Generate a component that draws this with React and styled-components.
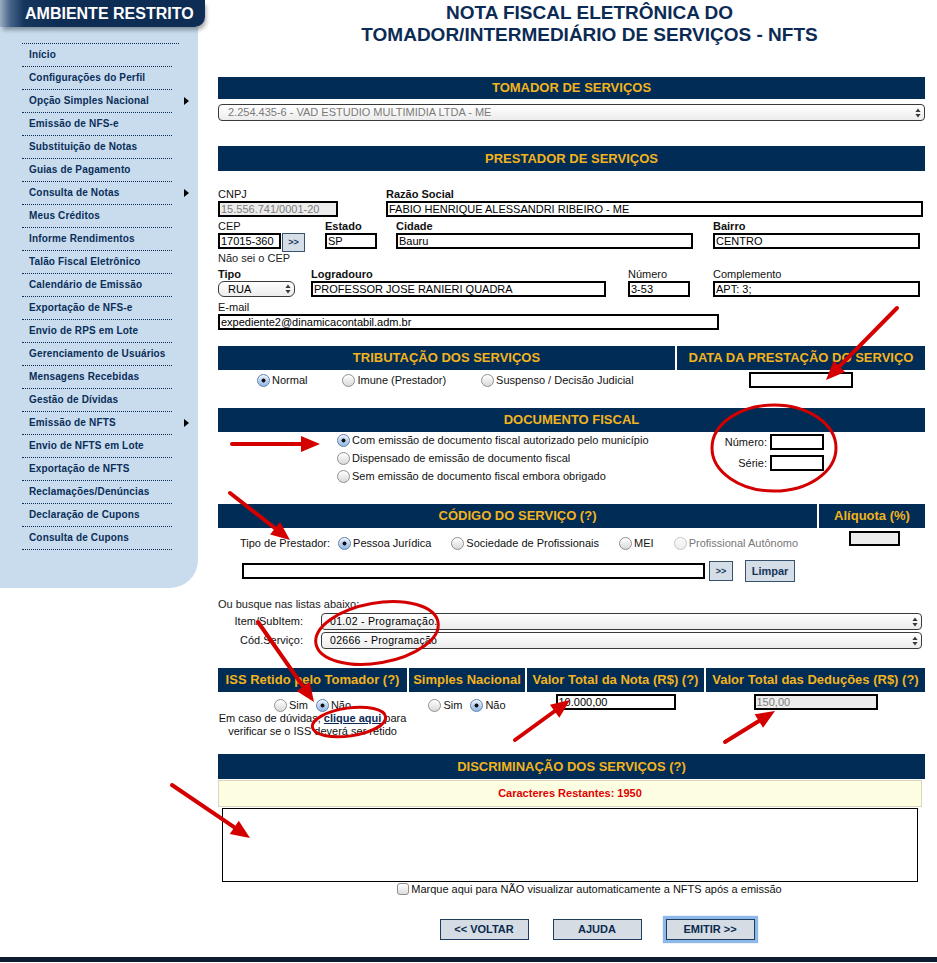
import React from 'react';
import styled, { createGlobalStyle } from 'styled-components';

const GlobalStyle = createGlobalStyle`
  html, body { margin: 0; padding: 0; background: #fff; overflow: hidden; }
  body { font-family: "Liberation Sans", Arial, sans-serif; font-size: 11px; color: #111; }
  * { box-sizing: border-box; }
`;

const NAVY = '#012c55';
const GOLD = '#f2b31e';
const FONT = '"Liberation Sans", Arial, sans-serif';

const Page = styled.div`
  position: relative;
  width: 937px;
  height: 963px;
  overflow: hidden;
`;

const Layout = styled.div`
  display: flex;
  align-items: flex-start;
`;

/* ---------- Sidebar ---------- */
const Sidebar = styled.aside`
  width: 205px;
  flex: none;
  display: flex;
  flex-direction: column;
`;

const SideHeader = styled.div`
  position: relative;
  z-index: 1;
  height: 27px;
  width: 205px;
  padding-left: 25px;
  background: linear-gradient(90deg, #9aaec2 0px, #46648a 10px, #16365e 24px, #0d2d55 60px, #0d2d55 100%);
  border-bottom-right-radius: 10px;
  box-shadow: 2px 4px 4px -1px rgba(0, 0, 0, 0.35);
  color: #fff;
  font: bold 16px/27px ${FONT};
  white-space: nowrap;
`;

const SidePanel = styled.div`
  width: 198px;
  height: 561px;
  padding-top: 16px;
  background: #c8dcee;
  border-bottom-right-radius: 28px;
`;

const Menu = styled.ul`
  list-style: none;
  margin: 0 0 0 22px;
  padding: 0;
  width: 157px;
  border-top: 1px dotted #0b2e59;
`;

const MenuRow = styled.li`
  display: flex;
  align-items: center;
  overflow: visible;
`;

const MenuLink = styled.span`
  flex: none;
  width: 150px;
  height: 23px;
  padding-left: 7px;
  border-bottom: 1px dotted #0b2e59;
  color: #0b2e59;
  font: bold 10px/22px ${FONT};
  letter-spacing: 0.15px;
  white-space: nowrap;
`;

const SubArrow = styled.span`
  flex: none;
  margin-left: 12px;
  margin-top: -1px;
  width: 0;
  height: 0;
  border-left: 5px solid #000;
  border-top: 4px solid transparent;
  border-bottom: 4px solid transparent;
`;

/* ---------- Main ---------- */
const Main = styled.main`
  margin-left: 13px;
  width: 707px;
  flex: none;
  display: flex;
  flex-direction: column;
`;

const Title = styled.h1`
  margin: 2px 0 0;
  padding-left: 36px;
  text-align: center;
  color: #0b2b55;
  font: bold 19px/22px ${FONT};
`;

const SectionBar = styled.div`
  height: ${(p) => p.$h || 24}px;
  margin-top: ${(p) => p.$mt || 0}px;
  background: ${NAVY};
  color: ${GOLD};
  text-align: center;
  font: bold 13px/${(p) => p.$h || 24}px ${FONT};
  white-space: nowrap;
  overflow: hidden;
`;

const SelectBox = styled.div`
  display: flex;
  align-items: center;
  justify-content: space-between;
  height: ${(p) => p.$h || 17}px;
  width: ${(p) => (p.$w ? `${p.$w}px` : '100%')};
  margin-top: ${(p) => p.$mt || 0}px;
  padding: 0 3px 0 ${(p) => p.$pl ?? 9}px;
  border: 1px solid #3a3a3a;
  border-radius: ${(p) => p.$r || 4}px;
  background: linear-gradient(#ffffff, #ececec);
  color: ${(p) => p.$color || '#000'};
  font: ${(p) => p.$fs || 11}px/1 ${FONT};
  letter-spacing: ${(p) => p.$ls || 0}px;
  white-space: nowrap;
`;

const UpDown = () => (
  <svg width="6" height="10" viewBox="0 0 6 10">
    <path d="M3 0.5 L5.6 4 L0.4 4 Z M3 9.5 L5.6 6 L0.4 6 Z" fill="#3a3a3a" />
  </svg>
);

const FieldRow = styled.div`
  display: flex;
  align-items: flex-start;
  margin-top: ${(p) => p.$mt || 0}px;
`;

const Field = styled.div`
  display: flex;
  flex-direction: column;
  width: ${(p) => p.$w}px;
  margin-left: ${(p) => p.$ml || 0}px;
  flex: none;
`;

const Label = styled.span`
  font: ${(p) => (p.$bold ? 'bold' : 'normal')} 11px/13px ${FONT};
  color: #111;
  white-space: nowrap;
`;

const TextInput = styled.input`
  display: block;
  width: ${(p) => (p.$w ? `${p.$w}px` : '100%')};
  height: ${(p) => p.$h || 16}px;
  margin: ${(p) => p.$m || 0};
  padding: 0 1px;
  border: 2px solid #000;
  border-radius: 0;
  background: ${(p) => (p.$gray ? '#ececec' : '#fff')};
  color: ${(p) => (p.$gray ? '#7d7d7d' : '#000')};
  font: 11px/12px ${FONT};
  outline: none;
`;

const SmallBtn = styled.button`
  width: ${(p) => p.$w}px;
  height: ${(p) => p.$h}px;
  margin-left: ${(p) => p.$ml || 0}px;
  padding: 0;
  border: 1px solid #37526f;
  background: #d5dde6;
  color: #17365d;
  font: bold ${(p) => p.$fs || 9}px/1 ${FONT};
  flex: none;
`;

const InlineWrap = styled.div`
  display: flex;
  align-items: flex-start;
`;

const Note = styled.div`
  color: #222;
  font: 11px/13px ${FONT};
  margin-top: ${(p) => p.$mt || 0}px;
`;

const Grid = styled.div`
  display: grid;
  grid-template-columns: ${(p) => p.$cols};
  column-gap: 2px;
  margin-top: ${(p) => p.$mt || 0}px;
`;

const Cell = styled.div`
  display: flex;
  flex-direction: column;
  align-items: ${(p) => p.$align || 'stretch'};
  padding-top: ${(p) => p.$pt || 0}px;
`;

const RadioGroup = styled.div`
  display: flex;
  align-items: center;
  height: ${(p) => p.$h || 15}px;
  gap: ${(p) => p.$gap}px;
  padding-left: ${(p) => p.$pl || 0}px;
  justify-content: ${(p) => p.$justify || 'flex-start'};
  margin-top: ${(p) => p.$mt || 0}px;
`;

const RadioOpt = styled.label`
  display: flex;
  align-items: center;
  gap: 2px;
  color: ${(p) => (p.$disabled ? '#777' : '#111')};
  font: 11px/13px ${FONT};
  white-space: nowrap;
`;

const RadioDot = styled.span`
  flex: none;
  width: 13px;
  height: 13px;
  border-radius: 50%;
  border: 1px solid ${(p) => (p.$checked ? '#5d80ae' : p.$disabled ? '#c4c4c4' : '#8f8f8f')};
  background: ${(p) =>
    p.$checked
      ? 'radial-gradient(circle at 50% 50%, #111 0 1.7px, transparent 2.3px), linear-gradient(#e4eefb, #93b7e4)'
      : p.$disabled
      ? 'linear-gradient(#fafafa, #eeeeee)'
      : 'linear-gradient(#ffffff, #d9d9d9)'};
  box-shadow: inset 0 1px 1px rgba(255, 255, 255, 0.8);
`;

const Radio = ({ label, checked, disabled }) => (
  <RadioOpt $disabled={disabled}>
    <RadioDot $checked={checked} $disabled={disabled} />
    {label}
  </RadioOpt>
);

const DocBody = styled.div`
  display: flex;
  align-items: flex-start;
  padding-left: 119px;
`;

const DocOptions = styled.div`
  display: flex;
  flex-direction: column;
  margin-top: -1px;
`;

const DocOptRow = styled.div`
  display: flex;
  align-items: center;
  height: 18px;
`;

const NumGrid = styled.div`
  display: grid;
  grid-template-columns: auto 54px;
  column-gap: 3px;
  row-gap: 5px;
  align-items: center;
  justify-items: end;
  margin: 2px 101px 0 auto;
`;

const PlainText = styled.span`
  font: ${(p) => (p.$bold ? 'bold' : 'normal')} 11px/13px ${FONT};
  color: ${(p) => p.$color || '#111'};
  white-space: nowrap;
`;

const TipoRow = styled.div`
  display: flex;
  align-items: center;
  height: 14px;
  margin-top: 8px;
  padding-left: 22px;
  gap: 8px;
`;

const TipoRadios = styled.div`
  display: flex;
  align-items: center;
  gap: 20px;
`;

const SearchRow = styled.div`
  display: flex;
  align-items: center;
  height: 22px;
  margin-top: 10px;
  padding-left: 24px;
`;

const ListGrid = styled.div`
  display: grid;
  grid-template-columns: 85px 601px;
  column-gap: 18px;
  row-gap: 2px;
  align-items: center;
  margin-top: 2px;
`;

const ListLabel = styled.span`
  justify-self: end;
  font: 11px/13px ${FONT};
  color: #111;
  white-space: nowrap;
`;

const HelpText = styled.div`
  text-align: center;
  font: 11px/13px ${FONT};
  color: #111;
  white-space: nowrap;
`;

const HelpLink = styled.a`
  color: #0b2b55;
  font-weight: bold;
  text-decoration: underline;
`;

const CounterBox = styled.div`
  width: 704px;
  height: 27px;
  margin-top: 1px;
  border: 1px solid #d9d7bd;
  background: #fdfde2;
  color: #e00000;
  text-align: center;
  font: bold 11px/25px ${FONT};
`;

const TextArea = styled.textarea`
  display: block;
  width: 696px;
  height: 74px;
  margin: 1px 0 0 4px;
  border: 1px solid #000;
  resize: none;
  outline: none;
  font: 11px ${FONT};
`;

const CheckLine = styled.div`
  display: flex;
  align-items: center;
  justify-content: center;
  gap: 2px;
  height: 14px;
  padding-left: 36px;
  font: 11px/13px ${FONT};
  color: #111;
`;

const CheckBox = styled.span`
  width: 12px;
  height: 12px;
  border: 1px solid #8d8d8d;
  border-radius: 3px;
  background: linear-gradient(#ffffff, #dcdcdc);
`;

const ButtonRow = styled.div`
  display: flex;
  justify-content: center;
  gap: 24px;
  margin-top: 23px;
  padding-left: 51px;
`;

const ActionBtn = styled.button`
  width: 89px;
  height: 21px;
  padding: 0;
  border: 1px solid #1f3b5d;
  background: #d5dce4;
  color: #0b2a4d;
  font: bold 11px/1 ${FONT};
  box-shadow: ${(p) => (p.$focus ? '0 0 1px 3px #8fb8ea' : 'none')};
`;

const Footer = styled.footer`
  height: 5px;
  margin-top: 17px;
  background: #0c1b30;
`;

const Overlay = styled.svg`
  position: absolute;
  left: 0;
  top: 0;
  pointer-events: none;
`;

const menu = [
  ['Início'],
  ['Configurações do Perfil'],
  ['Opção Simples Nacional', true],
  ['Emissão de NFS-e'],
  ['Substituição de Notas'],
  ['Guias de Pagamento'],
  ['Consulta de Notas', true],
  ['Meus Créditos'],
  ['Informe Rendimentos'],
  ['Talão Fiscal Eletrônico'],
  ['Calendário de Emissão'],
  ['Exportação de NFS-e'],
  ['Envio de RPS em Lote'],
  ['Gerenciamento de Usuários'],
  ['Mensagens Recebidas'],
  ['Gestão de Dívidas'],
  ['Emissão de NFTS', true],
  ['Envio de NFTS em Lote'],
  ['Exportação de NFTS'],
  ['Reclamações/Denúncias'],
  ['Declaração de Cupons'],
  ['Consulta de Cupons'],
];

const arrows = [
  [[897, 308], [826, 380]],
  [[232, 444], [320, 444]],
  [[230, 493], [290, 540]],
  [[258, 622], [314, 702]],
  [[515, 740], [570, 700]],
  [[725, 742], [775, 711]],
  [[172, 785], [250, 838]],
];

const Arrow = ({ from, to }) => {
  const [x1, y1] = from;
  const [x2, y2] = to;
  const dx = x2 - x1;
  const dy = y2 - y1;
  const len = Math.hypot(dx, dy);
  const ux = dx / len;
  const uy = dy / len;
  const L = 19;
  const W = 8;
  const bx = x2 - ux * L;
  const by = y2 - uy * L;
  const p1 = `${bx - uy * W},${by + ux * W}`;
  const p2 = `${bx + uy * W},${by - ux * W}`;
  return (
    <g>
      <line x1={x1} y1={y1} x2={bx + ux * 2} y2={by + uy * 2} stroke="#d40000" strokeWidth="4" strokeLinecap="round" />
      <polygon points={`${x2},${y2} ${p1} ${p2}`} fill="#d40000" />
    </g>
  );
};

export default function App() {
  return (
    <Page>
      <GlobalStyle />
      <Layout>
        <Sidebar>
          <SideHeader>AMBIENTE RESTRITO</SideHeader>
          <SidePanel>
            <Menu>
              {menu.map(([label, sub]) => (
                <MenuRow key={label}>
                  <MenuLink>{label}</MenuLink>
                  {sub && <SubArrow />}
                </MenuRow>
              ))}
            </Menu>
          </SidePanel>
        </Sidebar>

        <Main>
          <Title>
            NOTA FISCAL ELETRÔNICA DO
            <br />
            TOMADOR/INTERMEDIÁRIO DE SERVIÇOS - NFTS
          </Title>

          <SectionBar $h={22} $mt={31}>TOMADOR DE SERVIÇOS</SectionBar>
          <SelectBox $mt={5} $color="#7a7a7a">
            <span>2.254.435-6 - VAD ESTUDIO MULTIMIDIA LTDA - ME</span>
            <UpDown />
          </SelectBox>

          <SectionBar $h={25} $mt={25}>PRESTADOR DE SERVIÇOS</SectionBar>

          <FieldRow $mt={17}>
            <Field $w={120}>
              <Label>CNPJ</Label>
              <TextInput $gray readOnly defaultValue="15.556.741/0001-20" />
            </Field>
            <Field $w={537} $ml={48}>
              <Label $bold>Razão Social</Label>
              <TextInput readOnly defaultValue="FABIO HENRIQUE ALESSANDRI RIBEIRO - ME" />
            </Field>
          </FieldRow>

          <FieldRow $mt={3}>
            <Field $w={87}>
              <Label>CEP</Label>
              <InlineWrap>
                <TextInput $w={63} readOnly defaultValue="17015-360" />
                <SmallBtn $w={23} $h={19} $ml={1}>&gt;&gt;</SmallBtn>
              </InlineWrap>
            </Field>
            <Field $w={52} $ml={20}>
              <Label $bold>Estado</Label>
              <TextInput readOnly defaultValue="SP" />
            </Field>
            <Field $w={297} $ml={19}>
              <Label $bold>Cidade</Label>
              <TextInput readOnly defaultValue="Bauru" />
            </Field>
            <Field $w={207} $ml={20}>
              <Label $bold>Bairro</Label>
              <TextInput readOnly defaultValue="CENTRO" />
            </Field>
          </FieldRow>
          <Note>Não sei o CEP</Note>

          <FieldRow $mt={3}>
            <Field $w={77}>
              <Label $bold>Tipo</Label>
              <SelectBox $h={16} $r={6} $pl={9}>
                <span>RUA</span>
                <UpDown />
              </SelectBox>
            </Field>
            <Field $w={295} $ml={16}>
              <Label $bold>Logradouro</Label>
              <TextInput readOnly defaultValue="PROFESSOR JOSE RANIERI QUADRA" />
            </Field>
            <Field $w={62} $ml={22}>
              <Label>Número</Label>
              <TextInput readOnly defaultValue="3-53" />
            </Field>
            <Field $w={207} $ml={23}>
              <Label>Complemento</Label>
              <TextInput readOnly defaultValue="APT: 3;" />
            </Field>
          </FieldRow>

          <FieldRow $mt={4}>
            <Field $w={501}>
              <Label>E-mail</Label>
              <TextInput readOnly defaultValue="expediente2@dinamicacontabil.adm.br" />
            </Field>
          </FieldRow>

          <Grid $cols="457px 248px" $mt={16}>
            <SectionBar>TRIBUTAÇÃO DOS SERVIÇOS</SectionBar>
            <SectionBar>DATA DA PRESTAÇÃO DO SERVIÇO</SectionBar>
            <Cell $pt={2}>
              <RadioGroup $gap={35} $pl={39} $h={16}>
                <Radio label="Normal" checked />
                <Radio label="Imune (Prestador)" />
                <Radio label="Suspenso / Decisão Judicial" />
              </RadioGroup>
            </Cell>
            <Cell $pt={2} $align="center">
              <TextInput $w={104} readOnly defaultValue="" />
            </Cell>
          </Grid>

          <SectionBar $mt={20}>DOCUMENTO FISCAL</SectionBar>
          <DocBody>
            <DocOptions>
              <DocOptRow><Radio label="Com emissão de documento fiscal autorizado pelo município" checked /></DocOptRow>
              <DocOptRow><Radio label="Dispensado de emissão de documento fiscal" /></DocOptRow>
              <DocOptRow><Radio label="Sem emissão de documento fiscal embora obrigado" /></DocOptRow>
            </DocOptions>
            <NumGrid>
              <PlainText>Número:</PlainText>
              <TextInput readOnly defaultValue="" />
              <PlainText>Série:</PlainText>
              <TextInput readOnly defaultValue="" />
            </NumGrid>
          </DocBody>

          <Grid $cols="599px 106px" $mt={19}>
            <SectionBar>CÓDIGO DO SERVIÇO (?)</SectionBar>
            <SectionBar>Alíquota (%)</SectionBar>
            <Cell>
              <TipoRow>
                <PlainText>Tipo de Prestador:</PlainText>
                <TipoRadios>
                  <Radio label="Pessoa Jurídica" checked />
                  <Radio label="Sociedade de Profissionais" />
                  <Radio label="MEI" />
                  <Radio label="Profissional Autônomo" disabled />
                </TipoRadios>
              </TipoRow>
            </Cell>
            <Cell $align="center">
              <TextInput $w={51} $h={15} $m="3px 0 0 4px" $gray readOnly defaultValue="" />
            </Cell>
          </Grid>

          <SearchRow>
            <TextInput $w={463} readOnly defaultValue="" />
            <SmallBtn $w={24} $h={20} $ml={4}>&gt;&gt;</SmallBtn>
            <SmallBtn $w={50} $h={22} $ml={12} $fs={11}>Limpar</SmallBtn>
          </SearchRow>

          <Note $mt={16}>Ou busque nas listas abaixo:</Note>
          <ListGrid>
            <ListLabel>Item/SubItem:</ListLabel>
            <SelectBox $pl={8} $fs={10.5} $ls={0.3}>
              <span>01.02 - Programação.</span>
              <UpDown />
            </SelectBox>
            <ListLabel>Cód.Serviço:</ListLabel>
            <SelectBox $pl={8} $fs={10.5} $ls={0.3}>
              <span>02666 - Programação</span>
              <UpDown />
            </SelectBox>
          </ListGrid>

          <Grid $cols="189px 116px 177px 219px" $mt={19}>
            <SectionBar>ISS Retido pelo Tomador (?)</SectionBar>
            <SectionBar>Simples Nacional</SectionBar>
            <SectionBar>Valor Total da Nota (R$) (?)</SectionBar>
            <SectionBar>Valor Total das Deduções (R$) (?)</SectionBar>
            <Cell>
              <RadioGroup $gap={8} $justify="center" $h={13} $mt={7}>
                <Radio label="Sim" />
                <Radio label="Não" checked />
              </RadioGroup>
              <HelpText>
                Em caso de dúvidas, <HelpLink>clique aqui</HelpLink> para
                <br />
                verificar se o ISS deverá ser retido
              </HelpText>
            </Cell>
            <Cell>
              <RadioGroup $gap={8} $justify="center" $h={13} $mt={7}>
                <Radio label="Sim" />
                <Radio label="Não" checked />
              </RadioGroup>
            </Cell>
            <Cell $align="center" $pt={2}>
              <TextInput $w={120} readOnly defaultValue="10.000,00" />
            </Cell>
            <Cell $align="center" $pt={2}>
              <TextInput $w={124} $gray readOnly defaultValue="150,00" />
            </Cell>
          </Grid>

          <SectionBar $h={25} $mt={16}>DISCRIMINAÇÃO DOS SERVIÇOS (?)</SectionBar>
          <CounterBox>Caracteres Restantes: 1950</CounterBox>
          <TextArea readOnly defaultValue="" />
          <CheckLine>
            <CheckBox />
            Marque aqui para NÃO visualizar automaticamente a NFTS após a emissão
          </CheckLine>

          <ButtonRow>
            <ActionBtn>&lt;&lt; VOLTAR</ActionBtn>
            <ActionBtn>AJUDA</ActionBtn>
            <ActionBtn $focus>EMITIR &gt;&gt;</ActionBtn>
          </ButtonRow>
        </Main>
      </Layout>
      <Footer />

      <Overlay width="937" height="963" viewBox="0 0 937 963">
        <ellipse cx="774" cy="448" rx="62" ry="43" fill="none" stroke="#d40000" strokeWidth="3" />
        <ellipse cx="377" cy="633" rx="62" ry="30" fill="none" stroke="#d40000" strokeWidth="3" transform="rotate(-10 377 633)" />
        <ellipse cx="349" cy="722" rx="37" ry="14" fill="none" stroke="#d40000" strokeWidth="3" transform="rotate(-8 349 722)" />
        {arrows.map(([f, t], i) => (
          <Arrow key={i} from={f} to={t} />
        ))}
      </Overlay>
    </Page>
  );
}
